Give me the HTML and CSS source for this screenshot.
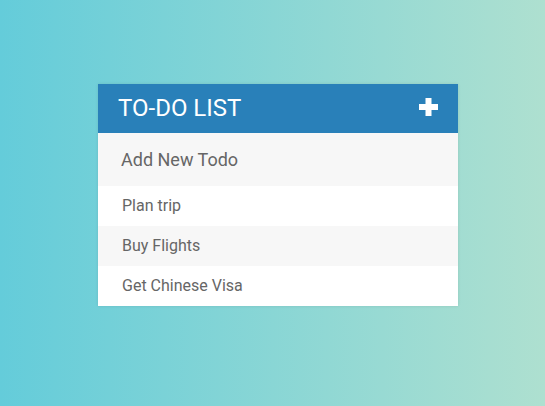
FILE: index.html
```html
<!DOCTYPE html>
<html>
<head>
<meta charset="utf-8">
<link rel="stylesheet" href="styles.css">
</head>
<body>
<div class="container">
  <h1 class="title">
    <span>To-Do List</span>
    <svg class="plus" width="19" height="18" viewBox="0 0 19 18"><path d="M6.5 0h6v6h6.5v6h-6.5v6h-6v-6h-6.5v-6h6.5z" fill="#fff"/></svg>
  </h1>
  <input class="new-todo" type="text" placeholder="Add New Todo">
  <ul class="todos">
    <li class="todo">Plan trip</li>
    <li class="todo">Buy Flights</li>
    <li class="todo">Get Chinese Visa</li>
  </ul>
</div>
</body>
</html>
```
FILE: styles.css
```css
html, body {
  margin: 0;
  height: 100%;
}
body {
  background: linear-gradient(to right, #64ccda, #aee0d0);
  font-family: Roboto, "Liberation Sans", sans-serif;
  padding: 84px 0 0 11px;
  box-sizing: border-box;
}
.container {
  width: 360px;
  margin: 0 auto;
  box-shadow: 0 0 3px rgba(0, 0, 0, 0.1);
  background: #fff;
}
.title {
  margin: 0;
  background: #2980b9;
  color: #fff;
  font-size: 24px;
  font-weight: normal;
  text-transform: uppercase;
  padding: 10px 20px;
  height: 49px;
  box-sizing: border-box;
  display: flex;
  align-items: center;
  justify-content: space-between;
  line-height: 29px;
}
.plus {
  display: block;
  margin-top: -4px;
}
.new-todo {
  display: block;
  width: 100%;
  box-sizing: border-box;
  font-family: inherit;
  font-size: 18px;
  background: #f7f7f7;
  border: 3px solid transparent;
  padding: 13px 13px 13px 20px;
  height: 53px;
  outline: none;
  color: #2980b9;
}
.new-todo::placeholder {
  color: #666;
}
.todos {
  list-style: none;
  margin: 0;
  padding: 0;
}
.todo {
  height: 40px;
  line-height: 40px;
  color: #666;
  font-size: 16px;
  padding-left: 24px;
  background: #fff;
}
.todo:nth-child(2n) {
  background: #f7f7f7;
}
```
